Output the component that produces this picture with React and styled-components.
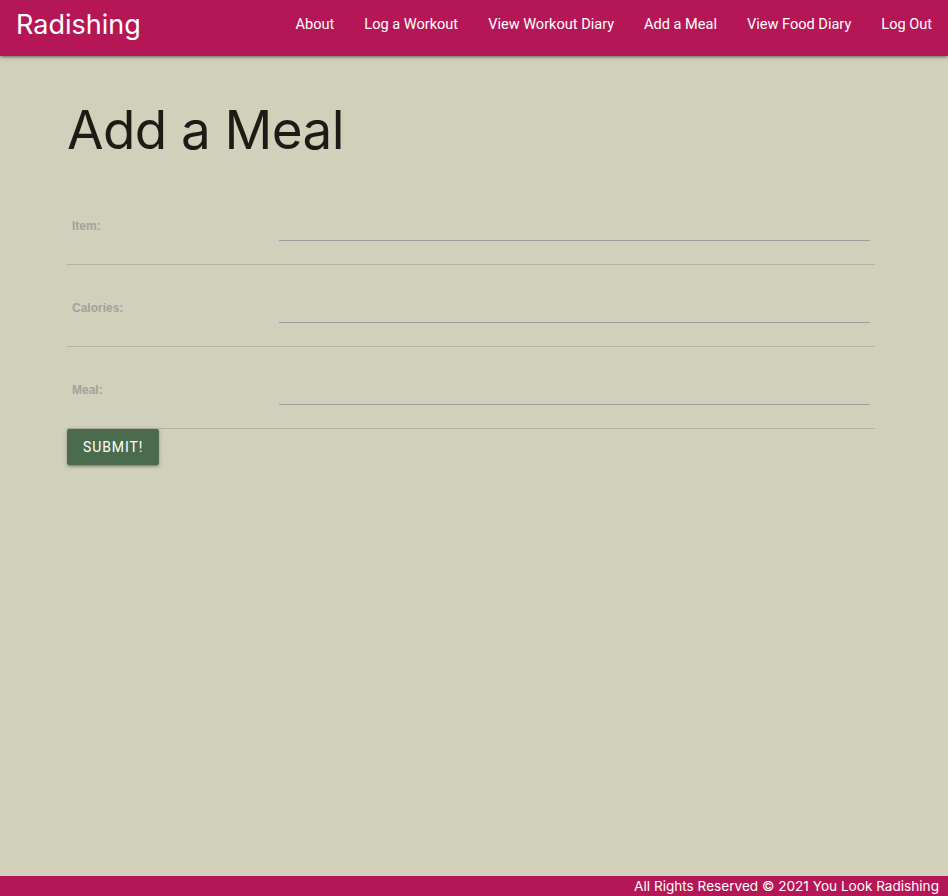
import React from "react";
import styled, { createGlobalStyle } from "styled-components";

const Global = createGlobalStyle`
  html, body { margin: 0; padding: 0; }
  body { background: #d1d0bb; font-family: Inter, "Noto Sans", sans-serif; }
  #root { min-height: 896px; }
`;

const Page = styled.div`
  display: flex;
  flex-direction: column;
  min-height: 896px;
  background: #d1d0bb;
`;

const Nav = styled.nav`
  height: 56px;
  background: #b51756;
  display: flex;
  align-items: flex-start;
  justify-content: space-between;
  box-shadow: 0 2px 2px 0 rgba(0,0,0,0.14), 0 3px 1px -2px rgba(0,0,0,0.12), 0 1px 5px 0 rgba(0,0,0,0.2);
  position: relative;
  z-index: 1;
`;

const Brand = styled.a`
  color: #fff;
  font-family: Inter, sans-serif;
  font-size: 27px;
  padding-left: 16px;
  text-decoration: none;
  line-height: 50px;
`;

const NavList = styled.ul`
  display: flex;
  list-style: none;
  margin: 0;
  padding: 0 1px 0 0;
`;

const NavLink = styled.a`
  display: block;
  color: #fff;
  font-family: Roboto, sans-serif;
  font-size: 14.55px;
  padding: 0 15px;
  line-height: 49px;
  text-decoration: none;
`;

const Main = styled.main`
  flex: 1;
  padding: 0 73px 0 67px;
`;

const Title = styled.h1`
  font-family: Inter, sans-serif;
  font-weight: 400;
  font-size: 53px;
  color: #1c1c17;
  margin: 36px 0 0;
  line-height: 76px;
  letter-spacing: -0.6px;
`;

const Form = styled.form`
  margin-top: 15px;
`;

const Row = styled.div`
  display: grid;
  grid-template-columns: 212px 1fr;
  align-items: start;
  height: 81px;
  border-bottom: 1px solid #b4b3a3;
`;

const Label = styled.label`
  font-family: "Liberation Sans", Arial, sans-serif;
  font-weight: 700;
  font-size: 12px;
  color: #a2a29c;
  padding: 36px 0 0 5px;
`;

const Input = styled.input`
  background: transparent;
  border: none;
  border-bottom: 1px solid #9c9ca2;
  height: 58px;
  box-sizing: border-box;
  margin: 0 5px 0 0;
  padding: 0;
  outline: none;
  font-size: 16px;
  width: auto;
`;

const Submit = styled.button`
  height: 36px;
  padding: 0 16px;
  background: #4a6b4e;
  color: #fff;
  border: none;
  border-radius: 2px;
  font-family: Roboto, sans-serif;
  font-size: 14px;
  letter-spacing: 0.9px;
  text-transform: uppercase;
  box-shadow: 0 2px 2px 0 rgba(0,0,0,0.14), 0 3px 1px -2px rgba(0,0,0,0.12), 0 1px 5px 0 rgba(0,0,0,0.2);
  cursor: pointer;
`;

const Footer = styled.footer`
  height: 20px;
  background: #b51756;
  color: #fff;
  font-family: Inter, sans-serif;
  font-size: 13.6px;
  line-height: 21px;
  text-align: right;
  padding-right: 9px;
`;

const links = ["About", "Log a Workout", "View Workout Diary", "Add a Meal", "View Food Diary", "Log Out"];
const fields = ["Item:", "Calories:", "Meal:"];

export default function App() {
  return (
    <Page>
      <Global />
      <Nav>
        <Brand href="#">Radishing</Brand>
        <NavList>
          {links.map((l) => (
            <li key={l}><NavLink href="#">{l}</NavLink></li>
          ))}
        </NavList>
      </Nav>
      <Main>
        <Title>Add a Meal</Title>
        <Form onSubmit={(e) => e.preventDefault()}>
          {fields.map((f) => (
            <Row key={f}>
              <Label>{f}</Label>
              <Input type="text" />
            </Row>
          ))}
          <Submit type="submit">Submit!</Submit>
        </Form>
      </Main>
      <Footer>All Rights Reserved © 2021 You Look Radishing</Footer>
    </Page>
  );
}
